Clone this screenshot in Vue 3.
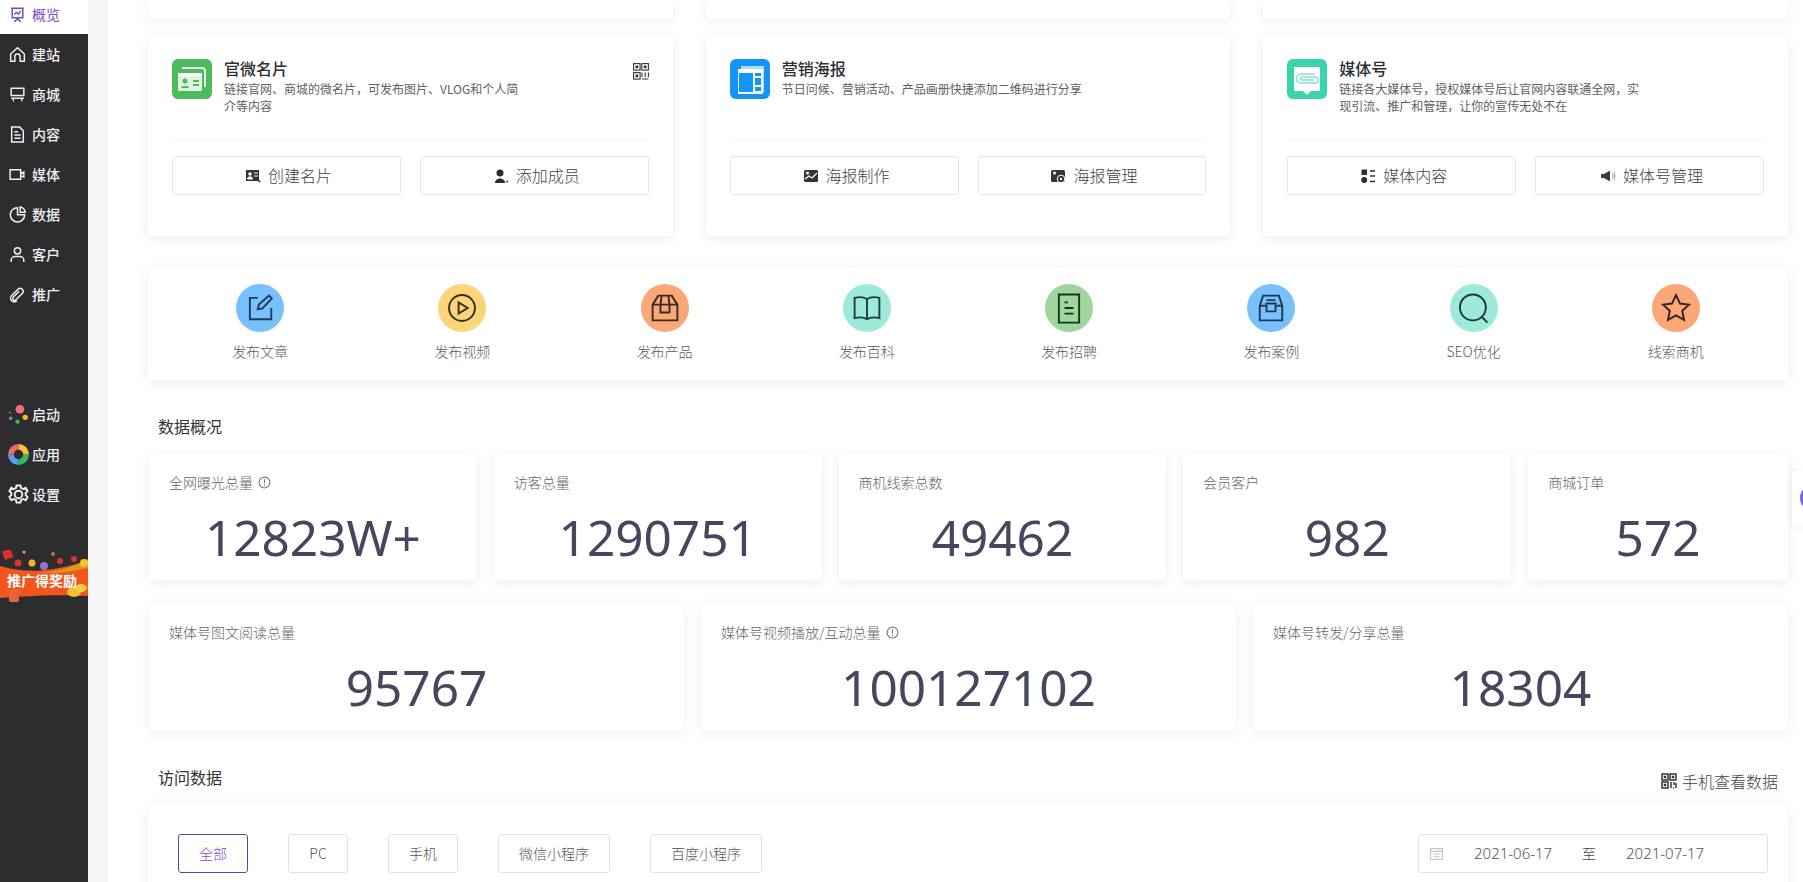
<script setup>
const navTop = [
  { t: '概览', active: true, d: 'M3 3h12M4 3v9h10V3M9 12v1M6 16l3-3 3 3M6 9l2-2 2 1.500 2-3' },
  { t: '建站', d: 'M2.500 8.500 9 2.500l6.500 6V15.500h-4v-4.500a2.500 2.500 0 0 0-5 0v4.500h-4z' },
  { t: '商城', d: 'M3 3h12v7H3zM3 12.500h12M5 12.500V15M13 12.500V15M5 15.500h.5M13 15.500h.5' },
  { t: '内容', d: 'M3.500 2h7.500l3.500 3.500V16h-11zM6 6.500h3.500M6 9.500h6M6 12.500h6' },
  { t: '媒体', d: 'M2 4.500h10v9H2zM12 8l3-1.500v5L12 10' },
  { t: '数据', d: 'M9 2.500a6.800 6.800 0 1 0 6.800 6.800H9zM11.500 1.800A6 6 0 0 1 16.300 6.800h-4.800z' },
  { t: '客户', d: 'M9 2.500a3 3 0 1 1 0 6 3 3 0 0 1 0-6zM3 16v-1.500a3.500 3.500 0 0 1 3.500-3.500h5a3.500 3.500 0 0 1 3.500 3.500V16' },
  { t: '推广', d: 'M3.500 10 9.500 4a2.800 2.800 0 0 1 4 4L7.500 14a1.700 1.700 0 0 1-2.500-2.500l5.500-5.500M3.500 10a3.500 3.500 0 0 0 5 5' }
]
const cards = [
  { title: '官微名片', desc: '链接官网、商城的微名片，可发布图片、VLOG和个人简介等内容', tone: 'green', kind: 'card', qr: true, a: '创建名片', b: '添加成员', ai: 'idcard', bi: 'person' },
  { title: '营销海报', desc: '节日问候、营销活动、产品画册快捷添加二维码进行分享', tone: 'blue', kind: 'poster', a: '海报制作', b: '海报管理', ai: 'poster', bi: 'gearposter' },
  { title: '媒体号', desc: '链接各大媒体号，授权媒体号后让官网内容联通全网，实现引流、推广和管理，让你的宣传无处不在', tone: 'teal', kind: 'bubble', a: '媒体内容', b: '媒体号管理', ai: 'list', bi: 'speaker' }
]
const quick = [
  { t: '发布文章', c: '#79c1fd', s: '#1f3a5f', d: 'M14 7H7v19h19v-10M14 17l1-4 9-8 2.500 2.500-8.500 9z' },
  { t: '发布视频', c: '#fbd578', s: '#33301f', d: 'M16 4.500a11.500 11.500 0 1 1 0 23 11.500 11.500 0 0 1 0-23zM13 11l8 5-8 5z' },
  { t: '发布产品', c: '#fba778', s: '#3a2a20', d: 'M5 13 10 5h12l5 8v14H5zM5 13h22M13 5l-1 8v7h8v-7l-1-8' },
  { t: '发布百科', c: '#9eeada', s: '#1e3f3e', d: 'M5 7c4-1 8-1 11 1 3-2 7-2 11-1v18c-4-1-8-1-11 1-3-2-7-2-11-1zM16 8v18' },
  { t: '发布招聘', c: '#9ed69e', s: '#16351f', d: 'M7 4h18v25H7zM12 11h3M12 16h8M12 21h8' },
  { t: '发布案例', c: '#79c1fd', s: '#1a3a58', d: 'M9 5h14l3 9v13H6V14zM6 14h6v5h8v-5h6M12 9h8M11 12h10' },
  { t: 'SEO优化', c: '#9eeada', s: '#1b3a38', d: 'M15 4a11.500 11.500 0 1 1 0 23 11.500 11.500 0 0 1 0-23zM23 24l5 5' },
  { t: '线索商机', c: '#fba778', s: '#33261e', d: 'M16 4.500l3.500 7.500 8 1-6 5.500 1.700 8L16 22.500 8.800 26.500l1.700-8-6-5.500 8-1z' }
]
const row1 = [
  { t: '全网曝光总量', v: '12823W+', tip: true },
  { t: '访客总量', v: '1290751' },
  { t: '商机线索总数', v: '49462' },
  { t: '会员客户', v: '982' },
  { t: '商城订单', v: '572' }
]
const row2 = [
  { t: '媒体号图文阅读总量', v: '95767' },
  { t: '媒体号视频播放/互动总量', v: '100127102', tip: true },
  { t: '媒体号转发/分享总量', v: '18304' }
]
const tabs = ['全部', 'PC', '手机', '微信小程序', '百度小程序']
</script>

<template>
  <div class="app">
    <aside class="sidebar">
      <nav class="nav">
        <a v-for="n in navTop" :key="n.t" class="nav-item" :class="{ active: n.active }">
          <svg class="nav-ic" viewBox="0 0 18 18" fill="none" stroke="currentColor" stroke-width="1.400"><path :d="n.d" /></svg>
          <span class="nav-text">{{ n.t }}</span>
        </a>
      </nav>
      <nav class="nav nav-low">
        <a class="nav-item">
          <svg class="nav-ic wide" viewBox="0 0 22 22"><circle cx="12.500" cy="5.500" r="4.500" fill="#f46d7a" /><circle cx="18" cy="14" r="2.800" fill="#f7bb2e" /><circle cx="10" cy="18.500" r="2.300" fill="#3fb45f" /><circle cx="2.800" cy="15" r="1.900" fill="#6f8fc4" /><circle cx="2" cy="9" r="1.200" fill="#4d7fae" /></svg>
          <span class="nav-text">启动</span>
        </a>
        <a class="nav-item">
          <svg class="nav-ic wide" viewBox="0 0 22 22" fill="none" stroke-width="6"><path d="M11 3a8 8 0 0 1 8 8" stroke="#f7c42e" /><path d="M19 11a8 8 0 0 1-8 8" stroke="#36b861" /><path d="M11 19a8 8 0 0 1-8-8" stroke="#5d9cf2" /><path d="M3 11a8 8 0 0 1 8-8" stroke="#ec6b6b" /></svg>
          <span class="nav-text">应用</span>
        </a>
        <a class="nav-item">
          <svg class="nav-ic wide" viewBox="0 0 22 22" fill="none" stroke="#f2f2f2" stroke-width="2"><circle cx="11" cy="11" r="4" /><path d="M9 1.500h4l.7 2.800 2.300 1 2.500-1.300 2 3.500-2 1.800v2.400l2 1.800-2 3.500-2.500-1.300-2.300 1-.7 2.800H9l-.7-2.800-2.300-1-2.500 1.300-2-3.500 2-1.800V9.300l-2-1.800 2-3.500L6 5.300l2.300-1z" /></svg>
          <span class="nav-text">设置</span>
        </a>
      </nav>
      <div class="promo">
        <svg class="promo-art" viewBox="0 0 88 54">
          <path d="M0 16C25 24 55 22 88 10V46C60 44 25 46 0 48z" fill="#f2561d" />
          <path d="M38 23c18-1 36-6 50-14v9c-14 3-32 6-50 5z" fill="#d99b1c" />
          <rect x="3" y="0" width="9" height="9" fill="#d6322c" transform="rotate(-20 7 4)" />
          <circle cx="18" cy="13" r="3.500" fill="#d8352c" /><circle cx="32" cy="13" r="3.500" fill="#f2b52b" />
          <circle cx="44" cy="16" r="4" fill="#9a6fd0" /><circle cx="60" cy="11" r="3" fill="#d8352c" />
          <circle cx="53" cy="4" r="2" fill="#d86a3c" /><circle cx="24" cy="2" r="1.500" fill="#e7b32e" />
          <circle cx="74" cy="9" r="3" fill="#d8352c" /><circle cx="84" cy="13" r="4" fill="#f5c428" />
          <rect x="9" y="40" width="10" height="12" rx="2" fill="#e8623c" />
          <ellipse cx="74" cy="42" rx="7" ry="5" fill="#f2c230" /><ellipse cx="81" cy="38" rx="6" ry="4" fill="#f5cf48" />
        </svg>
        <span class="promo-text">推广得奖励</span>
      </div>
    </aside>
    <div class="gutter"></div>

    <main class="main">
      <div class="stubs"><div class="card stub" /><div class="card stub" /><div class="card stub" /></div>

      <section class="cards">
        <article v-for="c in cards" :key="c.title" class="card feature">
          <header class="feature-head">
            <span class="feature-ic" :class="c.tone">
              <svg v-if="c.kind === 'card'" viewBox="0 0 40 40" fill="none"><path d="M10 9h20a3 3 0 0 1 3 3v16" stroke="#fff" stroke-width="2" opacity=".85" /><rect x="6" y="14" width="24" height="18" rx="1" fill="#dff5e2" /><rect x="6" y="14" width="24" height="3" fill="#fff" /><circle cx="13" cy="22" r="2.500" fill="#4cbb5d" /><path d="M9 29c0-3 8-3 8 0z" fill="#4cbb5d" /><path d="M21 22h6M21 26h6" stroke="#4cbb5d" stroke-width="2" /></svg>
              <svg v-else-if="c.kind === 'poster'" viewBox="0 0 40 40" fill="none"><rect x="11" y="7" width="23" height="26" fill="#a9dcff" /><rect x="8" y="10" width="25" height="25" fill="#fff" /><rect x="9" y="14" width="14" height="19" fill="#1296f9" /><path d="M25 14h6v3h-6zM25 19h6v7h-6zM25 28h6v4h-6z" fill="#1296f9" /></svg>
              <svg v-else viewBox="0 0 40 40" fill="none"><path d="M7 8h26v24h-9l-4 4-4-4H7z" fill="#fff" /><path d="M28 15H14a4.500 4.500 0 0 0 0 9h14a3 3 0 0 0 0-6H15a1.500 1.500 0 0 0 0 3h12" stroke="#86e3c9" stroke-width="1.600" /></svg>
            </span>
            <div class="feature-copy">
              <h3>{{ c.title }}</h3>
              <p>{{ c.desc }}</p>
            </div>
            <svg v-if="c.qr" class="qr" viewBox="0 0 16 17" fill="none" stroke="#33353d" stroke-width="1.100"><rect x=".6" y=".6" width="6.500" height="6.500" /><rect x="8.900" y=".6" width="6.500" height="6.500" /><rect x=".6" y="9.600" width="6.500" height="6.500" /><path d="M9 9.500v4.500M12.200 9.500v4.500M15.400 9.500v4.500M8.900 16h6.500" /><path d="M2.500 2.500h2.700v2.700H2.500zM10.800 2.500h2.700v2.700h-2.700zM2.500 11.500h2.700v2.700H2.500z" fill="#33353d" stroke="none" /></svg>
          </header>
          <div class="feature-actions">
            <button v-for="(label, i) in [c.a, c.b]" :key="label" class="line-btn">
              <svg class="btn-ic" viewBox="0 0 16 16">
                <template v-if="(i ? c.bi : c.ai) === 'idcard'"><rect x="1" y="2" width="13" height="11" fill="#2f3136" /><circle cx="5" cy="6" r="1.800" fill="#fff" /><path d="M2.500 11c0-3 5-3 5 0zM9 5h4M9 8h4" fill="#fff" stroke="#fff" /><path d="M14.500 12v3M13 13.500h3" stroke="#777" /></template>
                <template v-else-if="(i ? c.bi : c.ai) === 'person'"><circle cx="7" cy="5" r="3.500" fill="#2f2a28" /><path d="M2 15c0-6 10-6 10 0z" fill="#2f2a28" /><path d="M14 12v3M12.500 13.500h3" stroke="#777" /></template>
                <template v-else-if="(i ? c.bi : c.ai) === 'poster'"><rect x="1" y="2" width="14" height="12" rx="1.500" fill="#33353b" /><circle cx="4.500" cy="5" r="1.500" fill="#fff" /><path d="M2 11l4-3 3 2 5-5" stroke="#fff" fill="none" stroke-width="1.200" /></template>
                <template v-else-if="(i ? c.bi : c.ai) === 'gearposter'"><rect x="1" y="2" width="14" height="12" rx="1.500" fill="#33353b" /><circle cx="4.500" cy="5" r="1.500" fill="#fff" /><circle cx="11" cy="11" r="3.800" fill="#33353b" stroke="#fff" /><circle cx="11" cy="11" r="1.200" fill="#fff" /></template>
                <template v-else-if="(i ? c.bi : c.ai) === 'list'"><rect x="1.500" y="1.500" width="5.500" height="5.500" fill="#2f3136" /><circle cx="4.200" cy="12" r="3" fill="#2f3136" /><path d="M10 3h5M10 8h5M10 13.500h5" stroke="#2f3136" stroke-width="1.700" /></template>
                <template v-else><path d="M1 6h3l6-3.500v11L4 10H1z" fill="#3a3c40" /><path d="M12 5.500a3.500 3.500 0 0 1 0 5M13.500 4a6 6 0 0 1 0 8" stroke="#999" fill="none" /></template>
              </svg>
              {{ label }}
            </button>
          </div>
        </article>
      </section>

      <section class="card quick">
        <a v-for="q in quick" :key="q.t" class="quick-item">
          <span class="quick-circle" :style="{ background: q.c }">
            <svg viewBox="0 0 32 32" fill="none" :stroke="q.s" stroke-width="1.700"><path :d="q.d" /></svg>
          </span>
          <span class="quick-label">{{ q.t }}</span>
        </a>
      </section>

      <h2 class="section-title">数据概况</h2>
      <section class="stats five">
        <div v-for="s in row1" :key="s.t" class="card stat">
          <div class="stat-label">{{ s.t }}<svg v-if="s.tip" class="tip" viewBox="0 0 12 12" fill="none" stroke="#777"><circle cx="6" cy="6" r="5" /><path d="M6 3v4M6 8v1.200" /></svg></div>
          <div class="stat-value">{{ s.v }}</div>
        </div>
      </section>
      <section class="stats three">
        <div v-for="s in row2" :key="s.t" class="card stat">
          <div class="stat-label">{{ s.t }}<svg v-if="s.tip" class="tip" viewBox="0 0 12 12" fill="none" stroke="#777"><circle cx="6" cy="6" r="5" /><path d="M6 3v4M6 8v1.200" /></svg></div>
          <div class="stat-value">{{ s.v }}</div>
        </div>
      </section>

      <div class="visit-head">
        <h2 class="section-title flat">访问数据</h2>
        <a class="phone-link">
          <svg class="phone-ic" viewBox="0 0 16 16" fill="none" stroke="#33333a" stroke-width="1.500"><rect x="1" y="1" width="6" height="6" /><rect x="9" y="1" width="6" height="6" /><rect x="1" y="9" width="6" height="6" /><path d="M3.500 3.500h1v1h-1zM11.500 3.500h1v1h-1zM3.500 11.500h1v1h-1zM10 9v6M13 9v3M15 10v5M12 15h1" /></svg>
          手机查看数据
        </a>
      </div>
      <section class="card visit">
        <div class="tabs">
          <button v-for="(t, i) in tabs" :key="t" class="tab" :class="{ on: i === 0 }">{{ t }}</button>
        </div>
        <div class="range">
          <svg class="cal" viewBox="0 0 12 12" fill="none" stroke="#c6c6c6"><path d="M.5 1.500h11v10H.5zM.5 4h11M3 6.500h6M3 9h6" /></svg>
          <span class="date">2021-06-17</span>
          <span class="to">至</span>
          <span class="date">2021-07-17</span>
        </div>
      </section>
    </main>

    <div class="side-tab"><span class="side-blob"></span></div>
  </div>
</template>

<style>
html, body { margin: 0; background: #fff; }
</style>

<style scoped>
.app {
  position: relative;
  display: flex;
  height: 882px;
  overflow: hidden;
  background: #fff;
  font-family: "Noto Sans CJK SC", "Noto Sans", sans-serif;
  color: #333;
}
.sidebar { flex: 0 0 88px; background: #2d2d30; display: flex; flex-direction: column; }
.gutter { flex: 0 0 20px; background: #f5f5f5; }
.nav { display: flex; flex-direction: column; }
.nav:first-child { margin-top: -6px; }
.nav-low { margin-top: 80px; }
.nav-item {
  display: flex;
  align-items: center;
  gap: 5px;
  height: 40px;
  padding-left: 8px;
  color: #f0f0f0;
  font-size: 14px;
  font-weight: 500;
  line-height: 20px;
}
.nav-text { padding-bottom: 1px; }
.nav-item.active { background: #fff; color: #7a4bc6; font-weight: 400; }
.nav-ic { width: 19px; height: 19px; flex: none; }
.nav-ic.wide { width: 21px; height: 21px; margin-right: -2px; }
.promo { position: relative; height: 54px; margin-top: 36px; }
.promo-art { display: block; width: 88px; height: 54px; }
.promo-text {
  position: absolute;
  left: 7px;
  top: 21px;
  color: #fff;
  font-size: 14px;
  font-weight: 700;
  line-height: 18px;
  white-space: nowrap;
}

.main { flex: 1; min-width: 0; padding: 0 15px 0 40px; }
.card { background: #fff; border-radius: 4px; box-shadow: 0 2px 12px rgba(0, 0, 0, .08); }
.stubs { display: grid; grid-template-columns: repeat(3, 1fr); gap: 33px; margin-bottom: 16px; }
.stub { height: 19px; border-radius: 0 0 4px 4px; }
.cards { display: grid; grid-template-columns: repeat(3, 1fr); gap: 33px; }
.feature { height: 201px; box-sizing: border-box; padding: 24px; }
.feature-head { display: flex; height: 81px; border-bottom: 1px solid #f3f3f3; }
.feature-ic { flex: none; width: 40px; height: 40px; border-radius: 6px; overflow: hidden; }
.feature-ic svg { display: block; width: 40px; height: 40px; }
.green { background: #4cbb5d; }
.blue { background: #1296f9; }
.teal { background: #3ad4ac; }
.feature-copy { margin-left: 12px; width: 300px; }
.feature-copy h3 { margin: -2px 0 1px; font-size: 16px; font-weight: 500; line-height: 22px; color: #2c2f36; }
.feature-copy p { margin: 0; font-size: 12px; line-height: 17px; color: #5d6066; }
.qr { width: 16px; height: 17px; margin-left: auto; margin-top: 4px; flex: none; }
.feature-actions { display: flex; justify-content: space-between; margin-top: 15px; gap: 19px; }
.line-btn {
  flex: 1;
  height: 39px;
  display: flex;
  align-items: center;
  justify-content: center;
  gap: 7px;
  background: #fff;
  border: 1px solid #e6e6e6;
  border-radius: 3px;
  color: #444;
  font: inherit;
  font-size: 16px;
  font-weight: 300;
  padding: 0 0 2px 4px;
}
.btn-ic { width: 16px; height: 16px; flex: none; margin-top: 2px; }

.quick {
  display: grid;
  grid-template-columns: repeat(8, 1fr);
  height: 112px;
  box-sizing: border-box;
  margin-top: 32px;
  padding: 16px 11px 0;
  border-radius: 0;
}
.quick-item { display: flex; flex-direction: column; align-items: center; }
.quick-circle { width: 48px; height: 48px; border-radius: 50%; display: flex; align-items: center; justify-content: center; }
.quick-circle svg { width: 36px; height: 36px; }
.quick-label { margin-top: 9px; font-size: 14px; line-height: 20px; color: #555a63; font-weight: 300; }

.section-title { margin: 35px 0 16px 10px; font-size: 16px; font-weight: 400; line-height: 22px; color: #333; }
.section-title.flat { margin: -1px 0 0 10px; }
.stats { display: grid; gap: 17px; }
.stats.five { grid-template-columns: repeat(4, 328fr) 260fr; margin: 0 0 22px 1px; }
.stats.three { grid-template-columns: repeat(3, 1fr); margin-left: 1px; }
.stat { height: 128px; box-sizing: border-box; padding: 19px 20px 0; }
.stat-label { display: flex; align-items: center; font-size: 14px; line-height: 20px; color: #666; font-weight: 300; }
.tip { width: 13px; height: 13px; margin-left: 5px; }
.stat-value {
  margin-top: 15px;
  text-align: center;
  font-family: "Noto Sans", sans-serif;
  font-size: 49.5px;
  line-height: 60px;
  font-weight: 400;
  color: #45475f;
}

.visit-head { display: flex; justify-content: space-between; align-items: flex-start; margin: 36px 10px 15px 0; height: 22px; }
.phone-link { display: flex; align-items: center; gap: 5px; font-size: 16px; line-height: 22px; color: #444; font-weight: 300; margin-top: 3px; }
.phone-ic { width: 16px; height: 16px; }
.visit { display: flex; justify-content: space-between; height: 200px; box-sizing: border-box; padding: 30px 20px 0 30px; }
.tabs { display: flex; gap: 40px; align-items: flex-start; }
.tab {
  height: 39px;
  min-width: 60px;
  padding: 0 20px 2px;
  background: #fff;
  border: 1px solid #e2e2e2;
  border-radius: 3px;
  font: inherit;
  font-size: 14px;
  font-weight: 300;
  color: #555;
}
.tab.on { border-color: #6a3ea1; color: #7a4bc6; }
.range {
  display: flex;
  flex: none;
  align-items: center;
  width: 350px;
  height: 39px;
  box-sizing: border-box;
  padding: 0 0 2px 11px;
  border: 1px solid #e2e2e2;
  border-radius: 3px;
  font-size: 14px;
  color: #555;
  white-space: nowrap;
}
.cal { width: 13px; height: 13px; margin: 2px 31px 0 0; flex: none; }
.date { font-family: "Noto Sans", sans-serif; font-size: 15px; font-weight: 300; flex: none; width: 78px; }
.to { margin: 0 30px; color: #444; font-weight: 300; }
.side-tab {
  position: absolute;
  right: 0;
  top: 471px;
  width: 11px;
  height: 56px;
  background: #fff;
  border-radius: 4px 0 0 4px;
  box-shadow: 0 0 6px rgba(0, 0, 0, .08);
  overflow: hidden;
}
.side-blob { position: absolute; left: 8px; top: 18px; width: 10px; height: 18px; border-radius: 50%; background: #7368e6; }
</style>
